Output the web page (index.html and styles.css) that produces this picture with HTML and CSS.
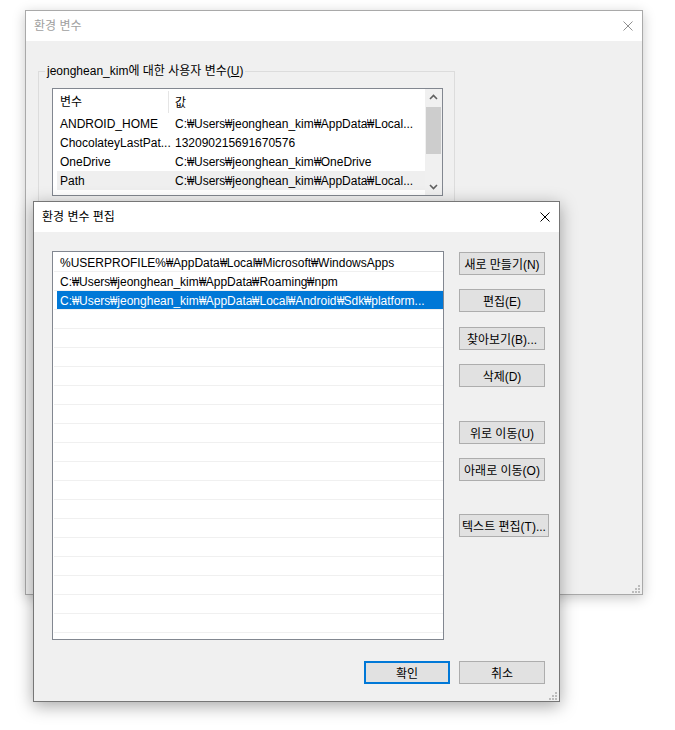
FILE: index.html
```html
<!DOCTYPE html>
<html lang="ko">
<head>
<meta charset="utf-8">
<title>환경 변수</title>
<link rel="stylesheet" href="styles.css">
</head>
<body>
<div class="desktop">
  <section class="win win-back">
    <header class="titlebar">
      <span class="title title-inactive">환경 변수</span>
      <svg class="close" width="10" height="10" viewBox="0 0 10 10"><path d="M0.5 0.5 L9.5 9.5 M9.5 0.5 L0.5 9.5" stroke="#8f8f8f" stroke-width="1" fill="none"/></svg>
    </header>
    <div class="back-body">
      <fieldset class="group">
        <legend>jeonghean_kim에 대한 사용자 변수(<u>U</u>)</legend>
        <div class="listview">
          <div class="lv-main">
            <div class="lv-head"><div class="c1 hc1">변수</div><div class="c2">값</div></div>
            <div class="lv-row"><div class="c1">ANDROID_HOME</div><div class="c2">C:<span class="w">₩</span>Users<span class="w">₩</span>jeonghean_kim<span class="w">₩</span>AppData<span class="w">₩</span>Local...</div></div>
            <div class="lv-row"><div class="c1">ChocolateyLastPat...</div><div class="c2">132090215691670576</div></div>
            <div class="lv-row"><div class="c1">OneDrive</div><div class="c2">C:<span class="w">₩</span>Users<span class="w">₩</span>jeonghean_kim<span class="w">₩</span>OneDrive</div></div>
            <div class="lv-row lv-hot"><div class="c1">Path</div><div class="c2">C:<span class="w">₩</span>Users<span class="w">₩</span>jeonghean_kim<span class="w">₩</span>AppData<span class="w">₩</span>Local...</div></div>
            <div class="lv-row"></div>
          </div>
          <div class="scrollbar">
            <svg class="sb-arrow" width="17" height="17" viewBox="0 0 17 17"><path d="M5 10 L8.5 6.5 L12 10" stroke="#606060" stroke-width="1.6" fill="none"/></svg>
            <div class="sb-thumb"></div>
            <div class="sb-track"></div>
            <svg class="sb-arrow" width="17" height="17" viewBox="0 0 17 17"><path d="M5 7 L8.5 10.5 L12 7" stroke="#606060" stroke-width="1.6" fill="none"/></svg>
          </div>
        </div>
      </fieldset>
    </div>
    <svg class="grip" width="8" height="8" viewBox="0 0 8 8"><g fill="#bcbcbc"><rect x="6" y="0" width="2" height="2"/><rect x="3" y="3" width="2" height="2"/><rect x="6" y="3" width="2" height="2"/><rect x="0" y="6" width="2" height="2"/><rect x="3" y="6" width="2" height="2"/><rect x="6" y="6" width="2" height="2"/></g></svg>
  </section>

  <section class="win win-front">
    <header class="titlebar">
      <span class="title">환경 변수 편집</span>
      <svg class="close" width="10" height="10" viewBox="0 0 10 10"><path d="M0.5 0.5 L9.5 9.5 M9.5 0.5 L0.5 9.5" stroke="#000" stroke-width="1" fill="none"/></svg>
    </header>
    <div class="front-body">
      <div class="edit-row">
        <div class="pathlist">
          <div class="pl-row">%USERPROFILE%<span class="w">₩</span>AppData<span class="w">₩</span>Local<span class="w">₩</span>Microsoft<span class="w">₩</span>WindowsApps</div>
          <div class="pl-row">C:<span class="w">₩</span>Users<span class="w">₩</span>jeonghean_kim<span class="w">₩</span>AppData<span class="w">₩</span>Roaming<span class="w">₩</span>npm</div>
          <div class="pl-row pl-selected">C:<span class="w">₩</span>Users<span class="w">₩</span>jeonghean_kim<span class="w">₩</span>AppData<span class="w">₩</span>Local<span class="w">₩</span>Android<span class="w">₩</span>Sdk<span class="w">₩</span>platform...</div>
          <div class="pl-row"></div><div class="pl-row"></div><div class="pl-row"></div>
          <div class="pl-row"></div><div class="pl-row"></div><div class="pl-row"></div>
          <div class="pl-row"></div><div class="pl-row"></div><div class="pl-row"></div>
          <div class="pl-row"></div><div class="pl-row"></div><div class="pl-row"></div>
          <div class="pl-row"></div><div class="pl-row"></div><div class="pl-row"></div>
          <div class="pl-row"></div><div class="pl-row"></div><div class="pl-row"></div>
        </div>
        <div class="btn-col">
          <button class="btn">새로 만들기(N)</button>
          <button class="btn mt14">편집(E)</button>
          <button class="btn mt15">찾아보기(B)...</button>
          <button class="btn mt14">삭제(D)</button>
          <button class="btn mt34">위로 이동(U)</button>
          <button class="btn mt14">아래로 이동(O)</button>
          <button class="btn btn-wide mt33">텍스트 편집(T)...</button>
        </div>
      </div>
      <div class="actions">
        <button class="btn btn-default">확인</button>
        <button class="btn">취소</button>
      </div>
    </div>
    <svg class="grip" width="8" height="8" viewBox="0 0 8 8"><g fill="#bcbcbc"><rect x="6" y="0" width="2" height="2"/><rect x="3" y="3" width="2" height="2"/><rect x="6" y="3" width="2" height="2"/><rect x="0" y="6" width="2" height="2"/><rect x="3" y="6" width="2" height="2"/><rect x="6" y="6" width="2" height="2"/></g></svg>
  </section>
</div>
</body>
</html>
```

FILE: styles.css
```css
* { box-sizing: border-box; }

body {
  margin: 0;
  background: #ffffff;
  font-family: "Liberation Sans", "Noto Sans CJK KR", sans-serif;
  font-size: 12px;
  color: #000;
}

.desktop {
  position: relative;
  width: 675px;
  height: 730px;
  overflow: hidden;
}

.w {
  display: inline-block;
  width: 7px;
  transform: scaleX(0.64);
  transform-origin: 0 50%;
}

.win {
  position: absolute;
  display: flex;
  flex-direction: column;
  background: #f0f0f0;
}

.win-back {
  left: 25px;
  top: 10px;
  width: 618px;
  height: 585px;
  border: 1px solid #a9a9a9;
  box-shadow: 0 3px 12px rgba(0, 0, 0, 0.22);
}

.win-front {
  left: 33px;
  top: 201px;
  width: 527px;
  height: 501px;
  border: 1px solid #767676;
  box-shadow: 0 4px 16px rgba(0, 0, 0, 0.35);
}

.titlebar {
  flex: none;
  height: 30px;
  background: #fff;
  display: flex;
  align-items: center;
  justify-content: space-between;
  padding: 0 9px 0 8px;
}

.title {
  font-size: 12px;
  line-height: 16px;
}

.title-inactive { color: #a0a0a0; }

.close { display: block; }

/* back window */
.back-body {
  padding: 22px 0 0 12px;
}

.group {
  margin: 0;
  width: 417px;
  height: 260px;
  min-width: 0;
  border: 1px solid #dcdcdc;
  padding: 9px 0 0 6px;
}

.group legend {
  padding: 0 2px;
  line-height: 16px;
}

.listview {
  margin-left: 7px;
  width: 391px;
  height: 108px;
  border: 1px solid #828790;
  background: #fff;
  display: flex;
  overflow: hidden;
}

.lv-main {
  flex: 1;
  min-width: 0;
  padding-left: 4px;
  overflow: hidden;
}

.lv-head {
  height: 25px;
  display: flex;
  align-items: center;
}

.lv-row {
  height: 19px;
  display: flex;
  align-items: center;
  white-space: nowrap;
}

.lv-hot { background: #efefef; }

.c1 {
  flex: none;
  width: 112px;
  padding-left: 3px;
  white-space: nowrap;
}

.hc1 {
  height: 22px;
  line-height: 22px;
  border-right: 1px solid #e5e5e5;
}

.c2 {
  padding-left: 6px;
  white-space: nowrap;
}

.scrollbar {
  flex: none;
  width: 17px;
  background: #f0f0f0;
  display: flex;
  flex-direction: column;
}

.sb-arrow { display: block; flex: none; }

.sb-thumb {
  flex: none;
  height: 47px;
  margin: 1px 1px 0;
  background: #cdcdcd;
}

.sb-track { flex: 1; }

.grip {
  position: absolute;
  right: 2px;
  bottom: 1px;
}

/* front dialog */
.front-body {
  flex: 1;
  display: flex;
  flex-direction: column;
  padding: 19px 14px 0 18px;
}

.edit-row {
  display: flex;
  align-items: flex-start;
}

.pathlist {
  flex: none;
  width: 392px;
  height: 389px;
  border: 1px solid #828790;
  background: #fff;
  padding-top: 1px;
  overflow: hidden;
}

.pl-row {
  height: 19px;
  margin-left: 1px;
  border-bottom: 1px solid #f0f0f0;
  padding: 2px 0 0 6px;
  line-height: 16px;
  white-space: nowrap;
}

.pl-selected {
  background: linear-gradient(90deg, transparent 3px, #0078d7 3px);
  color: #fff;
}

.btn-col {
  margin-left: 15px;
  padding-top: 1px;
  display: flex;
  flex-direction: column;
  align-items: flex-start;
}

.btn {
  width: 86px;
  height: 23px;
  padding: 0;
  margin: 0;
  background: #e1e1e1;
  border: 1px solid #adadad;
  font: inherit;
  font-size: 12px;
  color: #000;
  white-space: nowrap;
  text-align: center;
}

.btn-wide { width: 90px; }

.btn-default { border: 2px solid #0078d7; }

.mt14 { margin-top: 14px; }
.mt15 { margin-top: 15px; }
.mt33 { margin-top: 33px; }
.mt34 { margin-top: 34px; }

.actions {
  display: flex;
  justify-content: flex-end;
  gap: 9px;
  margin-top: 21px;
}
```
